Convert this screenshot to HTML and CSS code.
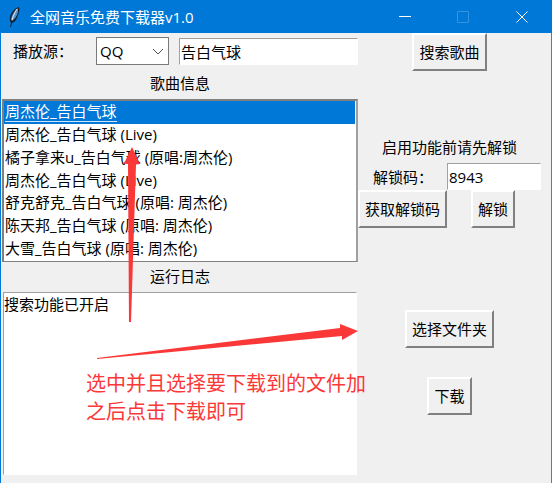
FILE: index.html
```html
<!DOCTYPE html>
<html lang="zh-CN">

<head>
    <meta charset="UTF-8">
    <meta name="viewport" content="width=device-width, initial-scale=1.0">
    <title>全网音乐免费下载器v1.0</title>
    <link rel="stylesheet" href="styles.css">
</head>

<body>
    <div class="window">
        <header class="titlebar">
            <svg class="feather" viewBox="0 0 16 22" aria-hidden="true">
                <path d="M13 1C9 2 5 6 4 11c-.5 3 0 4 1 6l-1 4h1l1-4c3-1 5-4 6-8 1-3 2-5 1-8z" fill="#16202e" />
                <path d="M12 2C9 4 6 8 5 13l1 2c3-2 5-5 6-9z" fill="#5c93c8" />
                <path d="M11 3C9 6 7 10 6 14" fill="none" stroke="#dcebf8" />
            </svg>
            <h1>全网音乐免费下载器v1.0</h1>
            <button class="win-button" aria-label="最小化">
                <svg viewBox="0 0 12 12"><path d="M0 5.5h12" /></svg>
            </button>
            <button class="win-button" aria-label="最大化" disabled>
                <svg viewBox="0 0 12 12"><path d="M.5.5h11v11H.5z" /></svg>
            </button>
            <button class="win-button" aria-label="关闭">
                <svg viewBox="0 0 12 12"><path d="M.5.5l11 11M11.5.5l-11 11" /></svg>
            </button>
        </header>

        <main class="content">
            <section class="left">
                <div class="search-row">
                    <label for="source">播放源：</label>
                    <div class="combo">
                        <select id="source">
                            <option>QQ</option>
                        </select>
                        <svg viewBox="0 0 12 8" aria-hidden="true"><path d="M1 1l5 5 5-5" /></svg>
                    </div>
                    <input class="entry" type="text" value="告白气球" aria-label="歌曲名">
                </div>
                <h2 id="songs-title">歌曲信息</h2>
                <ul class="songs" role="listbox" aria-labelledby="songs-title">
                    <li class="selected" role="option" aria-selected="true"><span>周杰伦_告白气球</span></li>
                    <li role="option">周杰伦_告白气球 (Live)</li>
                    <li role="option">橘子拿来u_告白气球 (原唱:周杰伦)</li>
                    <li role="option">周杰伦_告白气球 (Live)</li>
                    <li role="option">舒克舒克_告白气球 (原唱: 周杰伦)</li>
                    <li role="option">陈天邦_告白气球 (原唱: 周杰伦)</li>
                    <li role="option">大雪_告白气球 (原唱: 周杰伦)</li>
                </ul>
                <h2><label for="log">运行日志</label></h2>
                <textarea class="log" id="log">搜索功能已开启</textarea>
            </section>

            <section class="right">
                <button class="button">搜索歌曲</button>
                <div class="unlock">
                    <p>启用功能前请先解锁</p>
                    <div class="code-row">
                        <label for="code">解锁码：</label>
                        <input class="entry" id="code" type="text" value="8943">
                    </div>
                    <div class="unlock-buttons">
                        <button class="button">获取解锁码</button>
                        <button class="button">解锁</button>
                    </div>
                </div>
                <div class="download">
                    <button class="button">选择文件夹</button>
                    <button class="button">下载</button>
                </div>
            </section>
        </main>

        <!-- usage hint over the window -->
        <svg class="arrows" width="360" height="370" viewBox="0 0 360 370" aria-hidden="true">
            <path d="M132 147l8 17-4 .500L131 322h-2l-1-158-4-.500z" />
            <path d="M97 358L340 328v-4l18 7-16 9v-4L97 359z" />
        </svg>
        <p class="hint">选中并且选择要下载到的文件加<br>之后点击下载即可</p>
    </div>
</body>

</html>
```

FILE: styles.css
```css
* {
    box-sizing: border-box;
}

body {
    margin: 0;
    font-family: "Open Sans", "Noto Sans CJK SC", sans-serif;
    font-size: 15px;
    line-height: 22px;
    color: #000;
}

h1, h2, p, ul {
    margin: 0;
    padding: 0;
    font-size: 15px;
    font-weight: normal;
}

button, input, select, textarea {
    font: inherit;
    color: inherit;
    border-radius: 0;
}

.window {
    position: relative;
    display: flex;
    flex-direction: column;
    min-height: 100vh;
    background: #f0f0f0;
    border-left: 1px solid #0078d7;
    border-right: 1px solid #777;
}

.titlebar {
    display: flex;
    align-items: center;
    height: 33px;
    padding-left: 6px;
    margin: 0 -1px;
    background: #0078d7;
    color: #fff;
}

.feather {
    width: 16px;
    height: 22px;
    margin-right: 8px;
}

.titlebar h1 {
    flex: 1;
    line-height: 20px;
}

.win-button {
    display: flex;
    align-items: center;
    justify-content: center;
    width: 58px;
    height: 33px;
    padding: 0;
    border: none;
    background: none;
}

.win-button svg {
    width: 12px;
    height: 12px;
    fill: none;
    stroke: #fff;
}

.win-button:disabled svg {
    stroke: #3394e0;
}

.win-button:last-child {
    width: 60px;
}

.content {
    flex: 1;
    display: grid;
    grid-template-columns: minmax(0, 357fr) minmax(0, 193fr);
}

.left {
    display: flex;
    flex-direction: column;
    padding: 0 0 8px 1px;
}

.search-row {
    display: flex;
    align-items: center;
    height: 36px;
    padding-left: 11px;
}

.search-row label {
    width: 83px;
}

.combo {
    position: relative;
    width: 73px;
    margin-right: 10px;
}

.combo select {
    appearance: none;
    display: block;
    width: 100%;
    height: 28px;
    padding: 0 3px;
    border: 1px solid #7a7a7a;
    background: #fff;
}

.combo svg {
    position: absolute;
    right: 5px;
    top: 11px;
    width: 12px;
    height: 8px;
    fill: none;
    stroke: #555;
    pointer-events: none;
}

.entry {
    flex: 1;
    min-width: 0;
    height: 27px;
    padding: 0 1px;
    border: 1px solid #fff;
    border-top-color: #a0a0a0;
    border-left-color: #a0a0a0;
    background: #fff;
}

.left h2 {
    height: 30px;
    line-height: 28px;
    text-align: center;
}

.songs {
    display: grid;
    grid-auto-rows: 1fr;
    height: 163px;
    border: 2px solid #808080;
    border-right-color: #a0a0a0;
    border-bottom-width: 1px;
    padding-right: 1px;
    background: #fff;
    line-height: 20px;
    list-style: none;
}

.songs li {
    padding-left: 1px;
    white-space: nowrap;
}

.songs .selected {
    background: #0078d7;
    color: #fff;
}

.selected span {
    display: inline-block;
    height: 21px;
    border-bottom: 1px solid #cce4f7;
}

.log {
    flex: 1;
    min-height: 183px;
    margin: 0 1px;
    padding: 0;
    border: 1px solid #fff;
    border-top-color: #a0a0a0;
    border-left-color: #a0a0a0;
    background: #fff;
    resize: none;
}

.right {
    display: flex;
    flex-direction: column;
    align-items: center;
    padding-right: 10px;
}

.button {
    height: 38px;
    padding: 0 5px;
    border: 2px solid #fff;
    border-right-color: #808080;
    border-bottom-color: #808080;
    background: #f0f0f0;
    white-space: nowrap;
}

.unlock {
    align-self: stretch;
    margin: 65px 0 82px;
}

.unlock p {
    text-align: center;
}

.code-row {
    display: flex;
    align-items: center;
    padding: 5px 0 0 15px;
}

.code-row label {
    width: 74px;
}

.unlock-buttons {
    display: flex;
    gap: 24px;
}

.download {
    display: flex;
    flex-direction: column;
    align-items: center;
    gap: 29px;
}

.arrows {
    position: absolute;
    left: -1px;
    top: 0;
    fill: #fb3838;
    pointer-events: none;
}

.hint {
    position: absolute;
    left: 85px;
    top: 370px;
    font-size: 20px;
    line-height: 28px;
    color: #fb3838;
    white-space: nowrap;
    pointer-events: none;
}
```
